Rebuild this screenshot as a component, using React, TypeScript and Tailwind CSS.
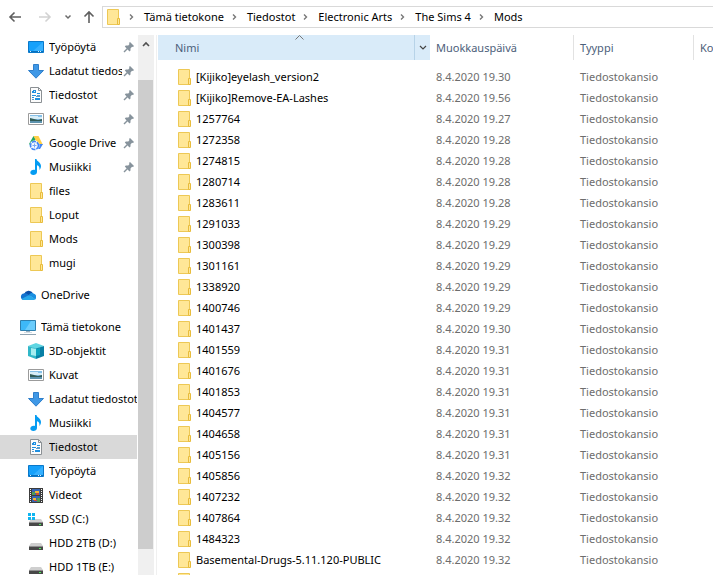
import type { ReactNode } from "react";
import clsx from "clsx";

type IconName =
  | "folder"
  | "desktop"
  | "download"
  | "document"
  | "picture"
  | "gdrive"
  | "music"
  | "onedrive"
  | "pc"
  | "cube"
  | "video"
  | "ssd"
  | "hdd";

const drive = (
  <>
    <path d="M3 8h10l2 3H1z" fill="#cfcfcf" />
    <path d="M1 11h14v1H1z" fill="#8f8f8f" />
    <path d="M1 12h14v3H1z" fill="#484848" />
    <path d="M11 13h2v1h-2z" fill="#4bf05b" />
  </>
);

const icons: Record<IconName, ReactNode> = {
  folder: (
    <>
      <path d="M2.5 .5h11v15h-11z" fill="#ffe797" stroke="#edc855" />
      <path d="M12.5 9.5h2v6h-2z" fill="#ffe797" stroke="#e8bc3c" />
    </>
  ),
  desktop: (
    <>
      <path d="M.5 2.5h15v11H.5z" fill="#16a1fb" stroke="#0a78c9" />
      <path d="M15 3v9L5 12z" fill="#35b0ff" />
      <path d="M1 12h14v1H1z" fill="#0870bd" />
      <path d="M2 12h1v1H2zM10 12h1v1h-1zM12 12h1v1h-1z" fill="#d8f1ff" />
    </>
  ),
  download: <path d="M5.5 1.5h5v6h5L8 15.2.5 7.5h5z" fill="#3f98e6" stroke="#2f7fcb" />,
  document: (
    <>
      <path d="M2.5 .5h8l3 3v12h-11z" fill="#fcfcfc" stroke="#8b9094" />
      <path d="M10.5 .5v3h3" fill="none" stroke="#8b9094" />
      <path d="M5 3h3v3H4V4h1zM4 8h4v1H4zM9 6h3v1H9zM4 10h2v1H4zM7 11h5v2H7z" fill="#1e8fe0" />
      <path d="M9 8h3v1H9zM4 12h2v1H4zM8 9h4v1H8z" fill="#5b9cca" />
      <path d="M6 4h1v1H6z" fill="#d6edfb" />
    </>
  ),
  picture: (
    <>
      <path d="M.5 2.5h15v11H.5z" fill="#fff" stroke="#9b9b9b" />
      <path d="M2 4h12v8H2z" fill="#86c0e8" />
      <path d="M2 5h8v1h4v2H2z" fill="#d7edf7" />
      <path d="M2 7l4 1 4 1 4-1v2H2z" fill="#315b56" />
      <path d="M2 10h12v2H2z" fill="#5d93ae" />
    </>
  ),
  gdrive: (
    <>
      <path d="M5.5 1L1 9l2 3 5-8z" fill="#20a464" />
      <path d="M5.5 1h5l4.5 9H10z" fill="#ffcf48" />
      <path d="M10 9h5l-3 5h-3z" fill="#4285f4" />
      <circle cx="6.5" cy="10.5" r="5" fill="#f3f7ff" />
      <circle cx="6.5" cy="10.5" r="4" fill="none" stroke="#4285f4" strokeWidth="1.6" strokeDasharray="4.2 1" />
      <path d="M4.5 10.5h4M6.5 8.5v4" stroke="#7aa9f7" />
    </>
  ),
  music: (
    <path d="M7 0h1.5c.3 2.6 4.5 3.2 4.5 7 0 1.7-.7 3-1.6 4 .5-2.7-.5-4.2-2.4-4.8V13c0 1.8-1.7 3-3.7 3-1.8 0-3-1-3-2.4 0-1.6 1.6-2.8 3.5-2.8.4 0 .8 0 1.2.2z" fill="#059cf2" />
  ),
  onedrive: (
    <>
      <path d="M4 7a5 5 0 0 1 9-.7L8 11z" fill="#0a4fa8" />
      <path d="M3.8 6.5C5.5 6 7 6.5 9 8l-5.5 5A3.3 3.3 0 0 1 3.8 6.5z" fill="#1373cf" />
      <path d="M9 8c1-2 3-2.4 4.5-1.6A3.5 3.5 0 0 1 15 12.5z" fill="#1a8ee0" />
      <path d="M1.5 12L9 8l6.5 4c-.6.7-1.3 1-2.5 1H3.5c-.8 0-1.5-.3-2-1z" fill="#28a8ea" />
    </>
  ),
  pc: (
    <>
      <path d="M.5 1.5h15v10H.5z" fill="#3db8f8" stroke="#2e7fae" />
      <path d="M11 2h4v9H5z" fill="#6accfc" />
      <path d="M6 12h4v1H6z" fill="#9bb0c0" />
      <path d="M4 13h8v1H4z" fill="#d2dce4" />
      <path d="M0 15h16v1H0z" fill="#91a4b2" />
    </>
  ),
  cube: (
    <>
      <path d="M8 0l8 3-8 3-8-3z" fill="#5fd6e2" />
      <path d="M0 3l8 2.5V16l-8-3z" fill="#30b7c8" />
      <path d="M16 3L8 5.5V16l8-3z" fill="#087fa5" />
      <path d="M3 5l5 1v7l-5-1z" fill="#a5edf0" />
      <path d="M8 6l4-1v7l-4 1z" fill="#0ba2bd" />
    </>
  ),
  video: (
    <>
      <path d="M1 1h14v15H1z" fill="#3c3c3c" />
      <path d="M2 2h1v1H2zM2 4h1v1H2zM2 6h1v1H2zM2 8h1v1H2zM2 10h1v1H2zM2 12h1v1H2zM2 14h1v1H2zM13 2h1v1h-1zM13 4h1v1h-1zM13 6h1v1h-1zM13 8h1v1h-1zM13 10h1v1h-1zM13 12h1v1h-1zM13 14h1v1h-1z" fill="#f4f4f4" />
      <path d="M4 2h8v6H4zM4 9h8v6H4z" fill="#3865b1" />
      <path d="M4 5h3v3H4zM9 11h3v4H9z" fill="#4e9b55" />
      <path d="M7 4h4v2H7zM5 11h3v2H5z" fill="#f2b632" />
      <path d="M8 6h3v2H8zM6 13h3v1H6z" fill="#cf4b35" />
    </>
  ),
  ssd: (
    <>
      {drive}
      <path d="M0 2h3v3H0zM4 2h3v3H4zM0 6h3v3H0zM4 6h3v3H4z" fill="#10b5f0" />
    </>
  ),
  hdd: drive,
};

function Icon({ name }: { name: IconName }) {
  return (
    <svg viewBox="0 0 16 16" className="h-4 w-4 shrink-0" aria-hidden="true">
      {icons[name]}
    </svg>
  );
}

function Pin() {
  return (
    <svg viewBox="0 0 12 12" className="mr-0.5 h-3 w-3 shrink-0" aria-hidden="true">
      <path d="M7 1l4 4-1 1-1-.3L7.5 7.5v2L6.5 10.5 1.8 5.6l1-1h2.500L6.500 3 6 2z" fill="#87939c" />
      <path d="M4.5 7.5L1 11" stroke="#87939c" strokeWidth="1.5" />
    </svg>
  );
}

const quickAccess: { label: string; icon: IconName; pinned?: boolean }[] = [
  { label: "Työpöytä", icon: "desktop", pinned: true },
  { label: "Ladatut tiedostot", icon: "download", pinned: true },
  { label: "Tiedostot", icon: "document", pinned: true },
  { label: "Kuvat", icon: "picture", pinned: true },
  { label: "Google Drive", icon: "gdrive", pinned: true },
  { label: "Musiikki", icon: "music", pinned: true },
  { label: "files", icon: "folder" },
  { label: "Loput", icon: "folder" },
  { label: "Mods", icon: "folder" },
  { label: "mugi", icon: "folder" },
];

const thisPc: { label: string; icon: IconName; selected?: boolean }[] = [
  { label: "3D-objektit", icon: "cube" },
  { label: "Kuvat", icon: "picture" },
  { label: "Ladatut tiedostot", icon: "download" },
  { label: "Musiikki", icon: "music" },
  { label: "Tiedostot", icon: "document", selected: true },
  { label: "Työpöytä", icon: "desktop" },
  { label: "Videot", icon: "video" },
  { label: "SSD (C:)", icon: "ssd" },
  { label: "HDD 2TB (D:)", icon: "hdd" },
  { label: "HDD 1TB (E:)", icon: "hdd" },
];

const files = [
  ["[Kijiko]eyelash_version2", "19.30"],
  ["[Kijiko]Remove-EA-Lashes", "19.56"],
  ["1257764", "19.27"],
  ["1272358", "19.28"],
  ["1274815", "19.28"],
  ["1280714", "19.28"],
  ["1283611", "19.28"],
  ["1291033", "19.29"],
  ["1300398", "19.29"],
  ["1301161", "19.29"],
  ["1338920", "19.29"],
  ["1400746", "19.29"],
  ["1401437", "19.30"],
  ["1401559", "19.31"],
  ["1401676", "19.31"],
  ["1401853", "19.31"],
  ["1404577", "19.31"],
  ["1404658", "19.31"],
  ["1405156", "19.31"],
  ["1405856", "19.32"],
  ["1407232", "19.32"],
  ["1407864", "19.32"],
  ["1484323", "19.32"],
  ["Basemental-Drugs-5.11.120-PUBLIC", "19.32"],
];

const path = ["Tämä tietokone", "Tiedostot", "Electronic Arts", "The Sims 4", "Mods"];

export default function App() {
  return (
    <div className="flex h-screen flex-col overflow-hidden bg-white font-['Noto_Sans','Open_Sans',sans-serif] text-[11px] leading-4 text-black">
      <AddressBar />
      <div className="flex min-h-0 flex-1">
        <Sidebar />
        <Scrollbar />
        <main className="ml-0.5 min-w-0 flex-1 overflow-hidden border-l border-[#f0f0f0] pl-px">
          <FileTable />
        </main>
      </div>
    </div>
  );
}

function AddressBar() {
  return (
    <header className="flex h-[35px] shrink-0 items-center pb-px">
      <div className="flex w-[102px] shrink-0 items-center pl-2">
        <button aria-label="Takaisin" className="mr-4">
          <Arrow className="text-[#5f5f5f]" />
        </button>
        <button aria-label="Eteenpäin" className="mr-3">
          <Arrow className="rotate-180 text-[#d2d2d2]" />
        </button>
        <button aria-label="Viimeisimmät sijainnit" className="mr-2.5">
          <svg viewBox="0 0 8 14" className="h-3.5 w-2">
            <path d="M1.5 5.5L4 8l2.5-2.5" fill="none" stroke="#6b6b6b" strokeWidth="1.5" />
          </svg>
        </button>
        <button aria-label="Ylös">
          <Arrow className="rotate-90 text-[#5f5f5f]" />
        </button>
      </div>
      <nav className="flex h-[22px] min-w-0 flex-1 items-center overflow-hidden border border-r-0 border-[#d9d9d9] pl-0.5">
        <Icon name="folder" />
        {path.map((part) => (
          <span key={part} className="flex items-center whitespace-nowrap">
            <Chevron />
            <a href="#">{part}</a>
          </span>
        ))}
      </nav>
    </header>
  );
}

function Arrow({ className }: { className: string }) {
  return (
    <svg viewBox="0 0 14 14" className={clsx("h-3.5 w-3.5", className)}>
      <path d="M13 7H2M6.5 2.5L2 7l4.5 4.5" fill="none" stroke="currentColor" strokeWidth="1.6" />
    </svg>
  );
}

function Chevron() {
  return (
    <svg viewBox="0 0 23 10" className="h-2.5 w-[23px] shrink-0" aria-hidden="true">
      <path d="M9 2.5L11.5 5 9 7.5" fill="none" stroke="#777" strokeWidth="1.4" />
    </svg>
  );
}

function Sidebar() {
  return (
    <nav className="w-[137px] shrink-0 overflow-hidden">
      {quickAccess.map((item) => (
        <SideItem key={item.label} {...item} />
      ))}
      <div className="mt-2">
        <SideItem label="OneDrive" icon="onedrive" root />
      </div>
      <div className="mt-2">
        <SideItem label="Tämä tietokone" icon="pc" root />
        {thisPc.map((item) => (
          <SideItem key={item.label} {...item} />
        ))}
      </div>
    </nav>
  );
}

type SideItemProps = { label: string; icon: IconName; pinned?: boolean; selected?: boolean; root?: boolean };

function SideItem({ label, icon, pinned, selected, root }: SideItemProps) {
  return (
    <a
      href="#"
      className={clsx("flex h-6 items-center gap-[5px]", root ? "pl-5" : "pl-7", selected && "bg-[#d9d9d9]")}
    >
      <Icon name={icon} />
      <span className="min-w-0 flex-1 overflow-hidden whitespace-nowrap">{label}</span>
      {pinned && (
        <span className="-ml-1 shrink-0">
          <Pin />
        </span>
      )}
    </a>
  );
}

function Scrollbar() {
  return (
    <div className="ml-px flex w-4 shrink-0 flex-col bg-[#f0f0f0]">
      <button aria-label="Vieritä ylös" className="flex h-[45px] justify-center pt-1.5">
        <svg viewBox="0 0 8 6" className="h-1.5 w-2">
          <path d="M1 5l3-3 3 3" fill="none" stroke="#505050" strokeWidth="1.6" />
        </svg>
      </button>
      <div className="mr-px mb-[26px] flex-1 bg-[#cdcdcd]" />
    </div>
  );
}

function FileTable() {
  return (
    <table className="w-full min-w-[620px] table-fixed text-left">
      <thead className="text-[#4c607a]">
        <tr>
          <th className="w-[272px] p-0 pb-1.5 font-normal">
            <div className="relative flex h-[25px] bg-[#d9ebf9]">
              <button className="flex-1 pl-[17px] text-left">Nimi</button>
              <svg viewBox="0 0 9 5" className="absolute top-0 left-[137px] h-[5px] w-[9px]">
                <path d="M.5 4.5l4-4 4 4" fill="none" stroke="#777" />
              </svg>
              <button aria-label="Suodata" className="flex w-4 items-center justify-center border-l border-[#b7d3e8]">
                <svg viewBox="0 0 8 6" className="h-1.5 w-2">
                  <path d="M1 1l3 3 3-3" fill="none" stroke="#444" strokeWidth="1.2" />
                </svg>
              </button>
            </div>
          </th>
          <HeadCell width="w-36">Muokkauspäivä</HeadCell>
          <HeadCell width="w-[120px]">Tyyppi</HeadCell>
          <HeadCell>Koko</HeadCell>
        </tr>
      </thead>
      <tbody className="text-[#6d6d6d]">
        {files.map(([name, time]) => (
          <tr key={name} className="h-[21px]">
            <td className="p-0 pl-[18px]">
              <div className="flex items-center gap-1 whitespace-nowrap text-black">
                <Icon name="folder" />
                {name}
              </div>
            </td>
            <td className="p-0 pl-1.5">8.4.2020 {time}</td>
            <td className="p-0 pl-1.5">Tiedostokansio</td>
            <td />
          </tr>
        ))}
        <tr className="h-[21px]">
          <td className="p-0 pl-[18px]">
            <Icon name="folder" />
          </td>
          <td />
          <td />
          <td />
        </tr>
      </tbody>
    </table>
  );
}

function HeadCell({ width, children }: { width?: string; children: ReactNode }) {
  return (
    <th className={clsx("p-0 pb-1.5 font-normal", width)}>
      <button className="h-[25px] w-full border-r border-[#e2e2e2] pl-1.5 text-left">{children}</button>
    </th>
  );
}
